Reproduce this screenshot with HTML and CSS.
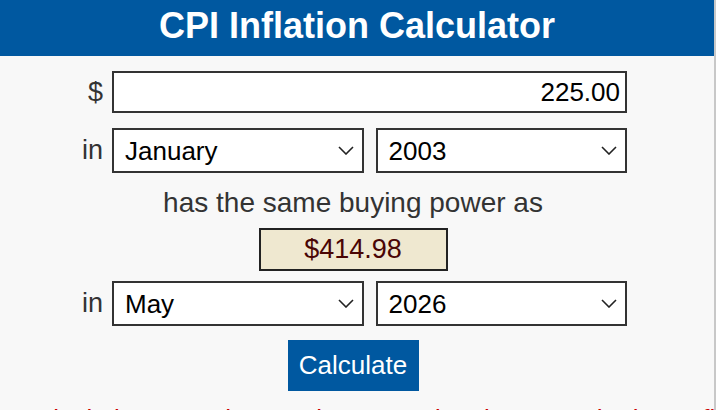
FILE: index.html
```html
<!DOCTYPE html>
<html lang="en">
<head>
    <meta charset="UTF-8">
    <meta name="viewport" content="width=device-width, initial-scale=1.0">
    <title>CPI Inflation Calculator</title>
    <link rel="stylesheet" href="styles.css">
</head>
<body>
    <div class="panel">
        <h1 class="title">CPI Inflation Calculator</h1>
        <form class="calc" id="calcForm">
            <div class="calc-row">
                <label class="calc-label" for="amount">$</label>
                <input class="calc-input" type="text" id="amount" name="amount" value="225.00">
            </div>

            <div class="calc-row">
                <label class="calc-label" for="month1">in</label>
                <div class="calc-pair">
                    <select class="calc-select" id="month1" name="month1">
                        <option selected>January</option>
                        <option>February</option>
                        <option>March</option>
                    </select>
                    <select class="calc-select" id="year1" name="year1">
                        <option selected>2003</option>
                        <option>2004</option>
                    </select>
                </div>
            </div>

            <p class="calc-same">has the same buying power as</p>
            <div class="calc-center">
                <div class="calc-result">$414.98</div>
            </div>

            <div class="calc-row calc-row-after">
                <label class="calc-label" for="month2">in</label>
                <div class="calc-pair">
                    <select class="calc-select" id="month2" name="month2">
                        <option>April</option>
                        <option selected>May</option>
                    </select>
                    <select class="calc-select" id="year2" name="year2">
                        <option selected>2026</option>
                        <option>2025</option>
                    </select>
                </div>
            </div>

            <div class="calc-center calc-submit">
                <button class="calc-button" type="submit">Calculate</button>
            </div>
        </form>
        <p class="note">Calculations use the October 2025 data because the latest figures are not yet out</p>
    </div>
</body>
</html>
```

FILE: styles.css
```css
body {
    font-family: "Liberation Sans", Arial, sans-serif;
    margin: 0;
    background-color: #fff;
    overflow: hidden;
}
.panel {
    width: 714px;
    height: 410px;
    background-color: #f8f8f8;
    border-right: 2px solid #c8c8c8;
    overflow: hidden;
}
.title {
    margin: 0;
    height: 52px;
    padding-bottom: 4px;
    line-height: 52px;
    font-size: 36px;
    font-weight: bold;
    text-align: center;
    color: #fff;
    background-color: #0058a0;
}
.calc {
    display: flex;
    flex-direction: column;
    width: 548px;
    margin: 0 0 0 79px;
    color: #333;
}
.calc-row {
    display: flex;
    align-items: center;
    gap: 9px;
    margin-top: 15px;
}
.calc-row-after {
    margin-top: 10px;
}
.calc-label {
    flex: 0 0 24px;
    font-size: 27px;
    text-align: right;
}
.calc-input {
    box-sizing: border-box;
    flex: 1;
    height: 42px;
    margin: 0;
    padding: 0 5px 0 8px;
    border: 2px solid #333;
    background-color: #fff;
    font-family: inherit;
    font-size: 26px;
    color: #000;
    text-align: right;
}
.calc-pair {
    display: flex;
    flex: 1;
    gap: 12px;
}
.calc-select {
    box-sizing: border-box;
    flex: 1;
    min-width: 0;
    height: 45px;
    margin: 0;
    padding: 0 30px 0 11px;
    border: 2px solid #333;
    border-radius: 0;
    background-color: #fff;
    background-image: url("data:image/svg+xml;utf8,<svg xmlns='http://www.w3.org/2000/svg' width='16' height='9' viewBox='0 0 16 9'><path d='M1 1 L8 8 L15 1' fill='none' stroke='%23222' stroke-width='1.6'/></svg>");
    background-repeat: no-repeat;
    background-position: right 8px center;
    font-family: inherit;
    font-size: 26px;
    color: #000;
    appearance: none;
    -webkit-appearance: none;
}
.calc-same {
    margin: 14px 0 0;
    line-height: 32px;
    font-size: 28px;
    text-align: center;
}
.calc-center {
    display: flex;
    justify-content: center;
    margin-top: 9px;
}
.calc-result {
    box-sizing: border-box;
    width: 189px;
    height: 43px;
    line-height: 39px;
    border: 2px solid #222;
    background-color: #efe8d0;
    color: #4a0505;
    font-size: 27px;
    text-align: center;
}
.calc-submit {
    margin-top: 14px;
}
.calc-button {
    width: 131px;
    height: 51px;
    padding: 0;
    border: none;
    background-color: #0058a0;
    color: #fff;
    font-family: inherit;
    font-size: 26px;
    cursor: pointer;
}
.note {
    margin: 13px 0 0;
    padding-left: 20px;
    white-space: nowrap;
    font-size: 26px;
    color: #c00;
}
```
